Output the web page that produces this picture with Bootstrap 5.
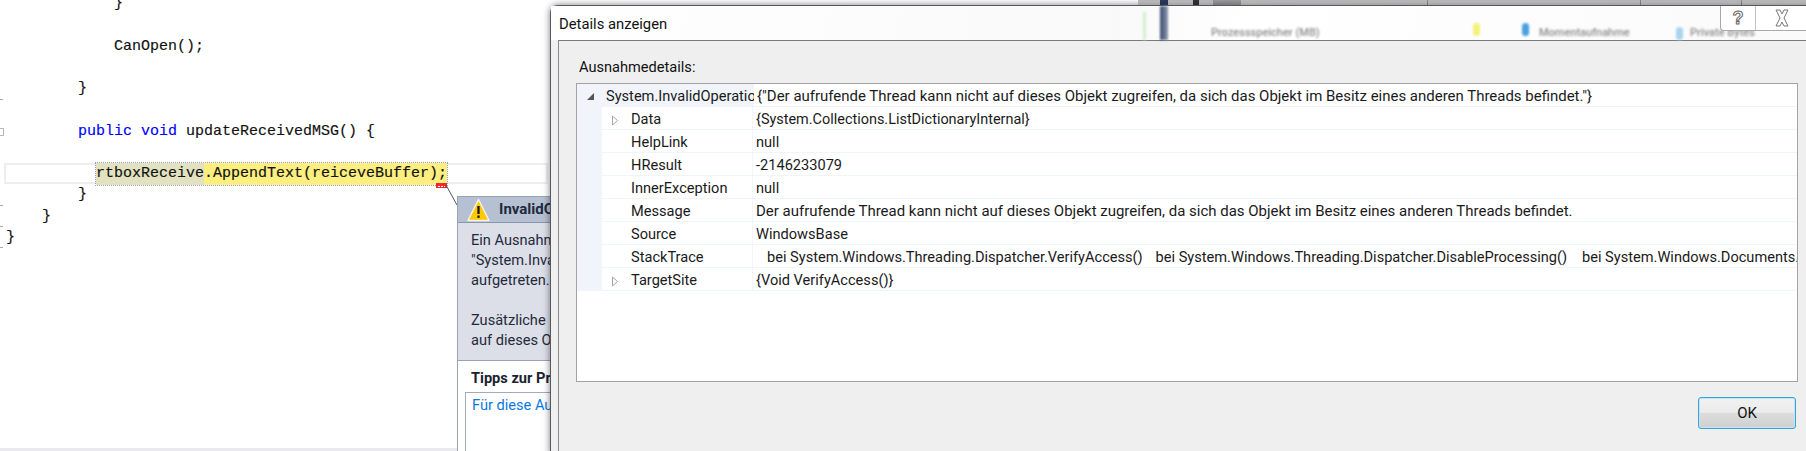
<!DOCTYPE html>
<html lang="de">
<head>
<meta charset="utf-8">
<title>Details anzeigen</title>
<link rel="stylesheet" href="https://cdn.jsdelivr.net/npm/bootstrap@5.3.0/dist/css/bootstrap.min.css">
<style>
html,body{margin:0;height:451px;overflow:hidden;background:#fff}
.stage{width:1806px;height:451px;overflow:hidden;font-family:"Roboto","Open Sans",sans-serif;font-size:14.6px;color:#1a1a1a}
/* code editor */
.editor{height:448px;overflow:hidden;font-family:"Liberation Mono",monospace;font-size:15px;color:#111;padding-left:6px;-webkit-text-stroke:.15px #111}
.code{margin-top:-7px}
.ln{height:21.25px;line-height:21.25px;white-space:pre}
.kw{color:#0000ff;-webkit-text-stroke:.15px #0000ff}
.cur{margin-left:-2px;padding-left:2px;width:544px;box-shadow:0 0 0 2px #eeeeee inset;position:relative}
.hl1{background:#e2e2c1;display:inline-block;height:22px}
.hl2{background:#fdee80;display:inline-block;height:22px}
.hlwrap{display:inline-block;height:22px;outline:1px dotted #9a9ad0}
.squig{position:absolute;left:432px;top:20px;width:11px;height:5px;background:#f02828;border-top:2px solid #f02828}
.squig::after{content:"";display:block;height:1px;margin:1px 2px 0;background:repeating-linear-gradient(90deg,#fff 0 2px,#f02828 2px 3px)}
.scrollstrip{height:3px;background:#e9e9ef;width:457px}
.gutter{left:0;top:0;width:4px;height:260px}
.tick{position:absolute;left:0;width:3px;height:1px;background:#a8a8a8}
.gbox{position:absolute;left:0;width:4px;height:8px;border:1px solid #b8b8b8;border-left:0}
.connector{left:440px;top:184px}
/* popup */
.popup{left:457px;top:196px;width:93px;height:255px;overflow:hidden;background:#fff;border-left:1px solid #9aa3b5;border-top:1px solid #9aa3b5;white-space:nowrap}
.pophead{height:26px;background:#b5c0d3;border-bottom:1px solid #8a95a8;padding-left:9px;gap:9px;font-weight:700;font-size:15px;color:#1f2a3c}
.popbody{height:138px;background:#dcdfe7;border-bottom:1px solid #9aa3b5;padding:7px 0 0 13px;line-height:20px;color:#1f2a3c}
.poptip{font-weight:700;color:#1a2230;padding:7px 0 0 13px;line-height:20px;height:31px}
.tipbox{margin-left:7px;height:70px;border:1px solid #a3abb9;border-right:0;padding:2px 0 0 6px;line-height:20px;color:#0a78e0}
/* dialog */
.dialog{left:550px;top:5px;width:1270px;height:450px;background:#f0f0f0;border:1px solid #55585c;border-bottom:0;border-top-left-radius:8px;box-shadow:0 0 7px rgba(20,20,30,.55)}
.dtitle{height:34px;background:linear-gradient(100deg,#fff 0,#f9f9f9 45%,#fff 55%,#fafafa 100%);padding-left:8px;line-height:37px;color:#111;font-size:14.8px}
.dinner{margin-left:7px;height:411px;background:#efefef;border-top:1px solid #7a7a7a;border-left:1px solid #8a8a8a;position:relative}
.dlabel{padding:16px 0 0 20px;height:42px;line-height:20px;color:#111}
.treebox{margin-left:17px;width:1222px;height:299px;background:#fff;border:1px solid #a3a3a3;white-space:nowrap;overflow:hidden}
.trow{height:23px;line-height:25px}
.stripe{width:25px;background:#f1f5fb;flex:none;position:relative}
.nm{width:151px;flex:none;overflow:hidden;border-bottom:1px solid #f0f4fb;border-right:1px solid #f2f5fb;padding-left:29px}
.nm0{padding-left:4px;background:#f1f5fb;width:152px;border-right:0;border-bottom:0}
.vl{flex:1 1 auto;min-width:0;overflow:hidden;padding-left:3px;border-bottom:1px solid #f0f4fb}
.vl0{border-bottom-color:#f3f3f3}
.vsent{font-size:14.97px}
.vdata{font-size:14.45px}
.ind{padding-left:11px}
.gap1{margin-left:2px}
.gap2{margin-left:4px}
.arr{position:absolute;left:9px;top:8px}
.arrtop{position:absolute;left:9px;top:8px}
.nmrel{position:relative}
.okbtn{width:98px;height:32px;padding:0;border:1px solid #3aa3d6;border-radius:3px;color:#111;font-size:15px;background:linear-gradient(#f2f2f2 0,#ebebeb 48%,#dddddd 50%,#cfcfcf 100%);box-shadow:inset 0 0 0 1px #bfe6f8;line-height:30px}
.okwrap{width:1237px;padding-top:15px}
/* window behind */
.strip{left:1138px;top:0;width:668px;height:5px;background:linear-gradient(#bdbdbd,#dadada)}
.seg{height:5px;border-right:1px solid #8d8d8d;position:relative}
.blk1{left:22px;top:0;width:8px;height:5px;background:#2c3a5e}
.blk2{left:55px;top:0;width:6px;height:5px;background:#333}
.blk3{left:75px;top:0;width:28px;height:5px;background:#9c9c9c}
.ghost{left:1143px;top:6px;width:640px;height:34px;overflow:hidden;filter:blur(1.2px);font-size:11px;font-weight:500;color:#8c8c8c}
.gbar1{left:0;top:6px;width:3px;height:28px;background:#d6f0cc}
.gbar2{left:17px;top:0;width:8px;height:34px;background:linear-gradient(90deg,#3a4a6e,#8f9ab0)}
.gt{position:absolute;top:19px;white-space:nowrap}
.dot{position:absolute;width:7px;height:13px;border-radius:4px}
.capbtns{left:1720px;top:6px;width:88px;height:25px;background:#fff;border:1px solid #a9a9a9;border-top:0;border-right:0;border-bottom-left-radius:4px}
.capq{width:35px;border-right:1px solid #c4c4c4;color:#fff;font-weight:700;font-size:18px;line-height:24px;text-align:center;-webkit-text-stroke:1px #666;font-family:"Liberation Sans",sans-serif}
.capx{flex:1;display:flex;justify-content:center;align-items:center}
</style>
</head>
<body>
<div class="stage position-relative">
  <div class="editor">
    <div class="code">
      <div class="ln">            }</div>
      <div class="ln"> </div>
      <div class="ln">            CanOpen();</div>
      <div class="ln"> </div>
      <div class="ln">        }</div>
      <div class="ln"> </div>
      <div class="ln">        <span class="kw">public</span> <span class="kw">void</span> updateReceivedMSG() {</div>
      <div class="ln"> </div>
      <div class="ln cur">          <span class="hlwrap"><span class="hl1">rtboxReceive</span><span class="hl2">.AppendText(reiceveBuffer);</span></span><span class="squig"></span></div>
      <div class="ln">        }</div>
      <div class="ln">    }</div>
      <div class="ln">}</div>
    </div>
  </div>
  <div class="scrollstrip"></div>

  <div class="gutter position-absolute">
    <span class="tick" style="top:99px"></span>
    <span class="gbox" style="top:128px"></span>
    <span class="tick" style="top:205px"></span>
    <span class="tick" style="top:226px"></span>
    <span class="tick" style="top:247px"></span>
  </div>

  <svg class="connector position-absolute" width="20" height="24" viewBox="0 0 20 24"><path d="M6 1 L17 21" stroke="#555" stroke-width="1" fill="none"/></svg>

  <div class="popup position-absolute">
    <div class="pophead d-flex align-items-center">
      <svg width="23" height="24" viewBox="0 0 23 24" class="flex-shrink-0"><path d="M11.5 1.5 L22 22.5 H1 Z" fill="#ffc800" stroke="#f4f4f0" stroke-width="1.4" stroke-linejoin="round"/><rect x="10.4" y="8" width="2.2" height="8" fill="#111"/><rect x="10.4" y="17.5" width="2.2" height="2.4" fill="#111"/></svg>
      <span>InvalidOperationException wurde nicht behandelt</span>
    </div>
    <div class="popbody">Ein Ausnahmefehler des Typs<br>"System.InvalidOperationException" ist in WindowsBase.dll<br>aufgetreten.<br><br>Zusätzliche Informationen: Der aufrufende Thread kann nicht<br>auf dieses Objekt zugreifen.</div>
    <div class="poptip">Tipps zur Problembehandlung:</div>
    <div class="tipbox">Für diese Ausnahme</div>
  </div>

  <div class="strip position-absolute d-flex">
    <div class="seg" style="width:290px"><span class="blk1 position-absolute"></span><span class="blk2 position-absolute"></span><span class="blk3 position-absolute"></span></div>
    <div class="seg" style="width:213px"></div>
    <div class="seg" style="width:101px"></div>
  </div>

  <div class="dialog position-absolute">
    <div class="dtitle">Details anzeigen</div>
    <div class="dinner">
      <div class="dlabel">Ausnahmedetails:</div>
      <div class="treebox">
        <div class="trow d-flex"><div class="stripe"><svg class="arrtop" width="9" height="9" viewBox="0 0 9 9"><path d="M8 1 V8 H1 Z" fill="#555"/></svg></div><div class="nm nm0">System.InvalidOperationException</div><div class="vl vl0 vsent">{"Der aufrufende Thread kann nicht auf dieses Objekt zugreifen, da sich das Objekt im Besitz eines anderen Threads befindet."}</div></div>
        <div class="trow d-flex"><div class="stripe"></div><div class="nm nmrel"><svg class="arr" width="8" height="11" viewBox="0 0 8 11"><path d="M1.5 1 L6.5 5.5 L1.5 10 Z" fill="#fff" stroke="#a6a6a6"/></svg>Data</div><div class="vl vdata">{System.Collections.ListDictionaryInternal}</div></div>
        <div class="trow d-flex"><div class="stripe"></div><div class="nm">HelpLink</div><div class="vl">null</div></div>
        <div class="trow d-flex"><div class="stripe"></div><div class="nm">HResult</div><div class="vl">-2146233079</div></div>
        <div class="trow d-flex"><div class="stripe"></div><div class="nm">InnerException</div><div class="vl">null</div></div>
        <div class="trow d-flex"><div class="stripe"></div><div class="nm">Message</div><div class="vl vsent">Der aufrufende Thread kann nicht auf dieses Objekt zugreifen, da sich das Objekt im Besitz eines anderen Threads befindet.</div></div>
        <div class="trow d-flex"><div class="stripe"></div><div class="nm">Source</div><div class="vl">WindowsBase</div></div>
        <div class="trow d-flex"><div class="stripe"></div><div class="nm">StackTrace</div><div class="vl"><span class="ind">bei System.Windows.Threading.Dispatcher.VerifyAccess()</span>&nbsp;&nbsp;&nbsp;<span class="gap1">bei System.Windows.Threading.Dispatcher.DisableProcessing()</span>&nbsp;&nbsp;&nbsp;<span class="gap2">bei System.Windows.Documents.</span></div></div>
        <div class="trow d-flex"><div class="stripe"></div><div class="nm nmrel"><svg class="arr" width="8" height="11" viewBox="0 0 8 11"><path d="M1.5 1 L6.5 5.5 L1.5 10 Z" fill="#fff" stroke="#a6a6a6"/></svg>TargetSite</div><div class="vl">{Void VerifyAccess()}</div></div>
      </div>
      <div class="okwrap d-flex justify-content-end"><button type="button" class="btn okbtn">OK</button></div>
    </div>
  </div>

  <div class="ghost position-absolute">
    <span class="gbar1 position-absolute"></span>
    <span class="gbar2 position-absolute"></span>
    <span class="gt" style="left:68px">Prozessspeicher (MB)</span>
    <span class="dot" style="left:330px;top:17px;background:#f4f27a"></span>
    <span class="dot" style="left:379px;top:17px;background:#4aa0e0"></span>
    <span class="gt" style="left:396px">Momentaufnahme</span>
    <span class="dot" style="left:533px;top:21px;background:#a8d4f0"></span>
    <span class="gt" style="left:547px">Private Bytes</span>
  </div>

  <div class="capbtns position-absolute d-flex">
    <div class="capq">?</div>
    <div class="capx"><svg width="16" height="18" viewBox="0 0 16 18"><path d="M2 1 H6 L8 5 L10 1 H14 L10 9 L14 17 H10 L8 13 L6 17 H2 L6 9 Z" fill="#fff" stroke="#777" stroke-width="1"/></svg></div>
  </div>
</div>
<script src="https://cdn.jsdelivr.net/npm/bootstrap@5.3.0/dist/js/bootstrap.bundle.min.js"></script>
</body>
</html>
